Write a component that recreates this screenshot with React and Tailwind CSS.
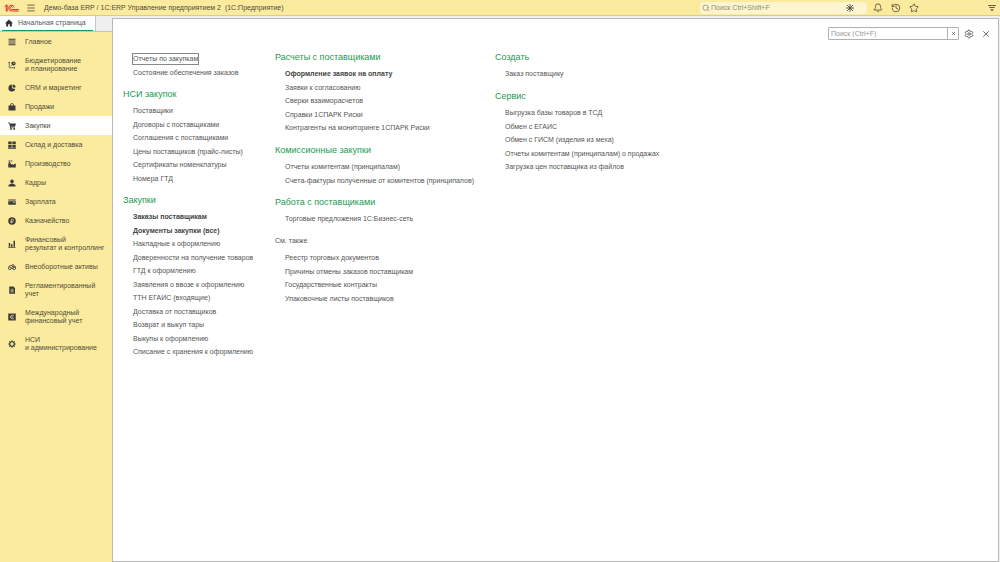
import { useState } from 'react'
import { Bell, History, Menu, Search, Settings, Star, X } from 'lucide-react'

const sections = [
  { icon: 'main', lines: ['Главное'] },
  { icon: 'budget', lines: ['Бюджетирование', 'и планирование'] },
  { icon: 'crm', lines: ['CRM и маркетинг'] },
  { icon: 'sales', lines: ['Продажи'] },
  { icon: 'purchases', lines: ['Закупки'] },
  { icon: 'stock', lines: ['Склад и доставка'] },
  { icon: 'factory', lines: ['Производство'] },
  { icon: 'staff', lines: ['Кадры'] },
  { icon: 'salary', lines: ['Зарплата'] },
  { icon: 'treasury', lines: ['Казначейство'] },
  { icon: 'finance', lines: ['Финансовый', 'результат и контроллинг'] },
  { icon: 'assets', lines: ['Внеоборотные активы'] },
  { icon: 'regulated', lines: ['Регламентированный', 'учет'] },
  { icon: 'ifrs', lines: ['Международный', 'финансовый учет'] },
  { icon: 'admin', lines: ['НСИ', 'и администрирование'] },
]

const columns = [
  {
    width: 'w-[152px] pt-px',
    groups: [
      { items: ['Отчеты по закупкам', 'Состояние обеспечения заказов'], focused: 'Отчеты по закупкам' },
      {
        title: 'НСИ закупок',
        items: [
          'Поставщики',
          'Договоры с поставщиками',
          'Соглашения с поставщиками',
          'Цены поставщиков (прайс-листы)',
          'Сертификаты номенклатуры',
          'Номера ГТД',
        ],
      },
      {
        title: 'Закупки',
        bold: ['Заказы поставщикам', 'Документы закупки (все)'],
        items: [
          'Заказы поставщикам',
          'Документы закупки (все)',
          'Накладные к оформлению',
          'Доверенности на получение товаров',
          'ГТД к оформлению',
          'Заявления о ввозе к оформлению',
          'ТТН ЕГАИС (входящие)',
          'Доставка от поставщиков',
          'Возврат и выкуп тары',
          'Выкупы к оформлению',
          'Списание с хранения к оформлению',
        ],
      },
    ],
  },
  {
    width: 'w-[220px]',
    groups: [
      {
        title: 'Расчеты с поставщиками',
        bold: ['Оформление заявок на оплату'],
        items: [
          'Оформление заявок на оплату',
          'Заявки к согласованию',
          'Сверки взаиморасчетов',
          'Справки 1СПАРК Риски',
          'Контрагенты на мониторинге 1СПАРК Риски',
        ],
      },
      {
        title: 'Комиссионные закупки',
        items: ['Отчеты комитентам (принципалам)', 'Счета-фактуры полученные от комитентов (принципалов)'],
      },
      { title: 'Работа с поставщиками', items: ['Торговые предложения 1С:Бизнес-сеть'] },
      {
        title: 'См. также',
        plain: true,
        items: [
          'Реестр торговых документов',
          'Причины отмены заказов поставщикам',
          'Государственные контракты',
          'Упаковочные листы поставщиков',
        ],
      },
    ],
  },
  {
    width: 'w-[190px]',
    groups: [
      { title: 'Создать', items: ['Заказ поставщику'] },
      {
        title: 'Сервис',
        items: [
          'Выгрузка базы товаров в ТСД',
          'Обмен с ЕГАИС',
          'Обмен с ГИСМ (изделия из меха)',
          'Отчеты комитентам (принципалам) о продажах',
          'Загрузка цен поставщика из файлов',
        ],
      },
    ],
  },
]

const shapes = {
  main: <path d="M1 1.5h14v2H1zM1 5.2h14v2H1zM1 8.9h14v2H1zM1 12.6h14v2H1z" />,
  budget: (
    <>
      <path d="M2.5 2v11.5H14M1 4l1.5-2L4 4M12 12l2 1.5-2 1.5M5.5 10.5l2-2" fill="none" stroke="currentColor" strokeWidth="1.4" />
      <circle cx="11" cy="5" r="4.2" />
      <path d="M11 2.5V5h2.5" fill="none" stroke="#fbeb9e" strokeWidth="1" />
    </>
  ),
  crm: (
    <>
      <path d="M7.5 1.2A7 7 0 1 0 14.6 10L8 8.5z" />
      <path d="M9.3.8a6.2 6.2 0 0 1 6 6.2h-6z" />
    </>
  ),
  sales: (
    <>
      <path d="M1 5h14v10H1z" />
      <path d="M5 8V4a3 3 0 0 1 6 0v4" fill="none" stroke="currentColor" strokeWidth="1.6" />
    </>
  ),
  purchases: (
    <>
      <path d="M0 1h3.2l.7 2H16l-2 6.500H5.800l.3 1.300H14v1.500H4.800L2.200 2.600H0z" />
      <circle cx="6" cy="14" r="1.8" />
      <circle cx="12.5" cy="14" r="1.8" />
    </>
  ),
  stock: <path d="M.5 1h6.8v5.7H.5zM8.700 1h6.800v5.700H8.700zM.5 8h6.800v5.300H.5zM8.700 8h6.800v5.300H8.700zM0 14h16v1.500H0z" />,
  factory: <path d="M.5 15V6.500h4.500l3 3V8l3.500 2V8.500L15.500 7v8zM1 1h3v2H1zM5 1h3.500v2H5zM1.500 4h3v2h-3z" />,
  staff: <path d="M8 .8a3.500 3.500 0 0 1 3.500 3.700c0 2.500-1.600 4.200-3.500 4.200S4.500 7 4.500 4.500A3.500 3.500 0 0 1 8 .8zM5.500 9.500h5l4.500 2.500v3H1v-3z" />,
  salary: <path d="M.5 3h15v2.200H.5zM.5 6.300h15V13.500H.5zM10.500 8.500V10h3V8.500z" fillRule="evenodd" />,
  treasury: (
    <>
      <circle cx="8" cy="8" r="7.5" />
      <path d="M6.500 12.500v-8h2.300a2 2 0 0 1 0 4.200H5M5 10.600h4.500" fill="none" stroke="#fbeb9e" strokeWidth="1.3" />
    </>
  ),
  finance: <path d="M1.500 6h3v7.500h-3zM6 8.500h3v5H6zM11 1.500h3v12h-3zM.5 14h14.500v1.300H.5z" />,
  assets: (
    <g fill="none" stroke="currentColor" strokeWidth="1.8">
      <circle cx="3.600" cy="10.500" r="2.700" />
      <circle cx="12.400" cy="10.500" r="2.700" />
      <path d="M1 7.500L5 5h3l2 3h6M6 10.500h4M8 3.500h3l2 4" />
    </g>
  ),
  regulated: (
    <>
      <path d="M2.500 1h8L14 4v11.500H2.500z" />
      <path d="M5 6.500h6.500M5 9h6.500M5 11.500h6.500M8.200 6.500v7" stroke="#fbeb9e" strokeWidth=".9" fill="none" />
    </>
  ),
  ifrs: (
    <>
      <path d="M.5 1h15v14H.5z" />
      <path d="M12 4.500H8.500a3.500 3.500 0 0 0 0 7H12M5 8h6" stroke="#fbeb9e" strokeWidth="1.300" fill="none" />
    </>
  ),
  admin: (
    <>
      <circle cx="8" cy="8" r="4.500" fill="none" stroke="currentColor" strokeWidth="2.400" />
      <path
        d="M8 .5v3M8 12.500v3M.5 8h3M12.500 8h3M2.700 2.700l2 2M11.300 11.300l2 2M2.700 13.300l2-2M11.300 4.700l2-2"
        stroke="currentColor"
        strokeWidth="2.400"
      />
    </>
  ),
}

function SectionIcon({ name }) {
  return (
    <svg viewBox="0 0 16 16" className="size-2 shrink-0 text-[#3c3c3c]" fill="currentColor" aria-hidden="true">
      {shapes[name]}
    </svg>
  )
}

function Logo() {
  return (
    <svg viewBox="0 0 30 16" className="h-2 w-[15px]" fill="none" stroke="#e0322b" strokeWidth="2" aria-label="1С">
      <path d="M1 5.500L4.500 2.500V15M4.500 2h1.800v13" />
      <path d="M20.500 6.500A5.800 5.800 0 1 0 15 14h14.500" />
      <path d="M17.500 7A2.800 2.800 0 1 0 15 11h14.500" />
    </svg>
  )
}

// the assistant mark at the end of the global search field
function Spark() {
  return (
    <svg viewBox="0 0 16 16" className="size-2" fill="none" stroke="#333" strokeWidth="1.6" aria-hidden="true">
      <path d="M8 0v16M0 8h16M2 2l12 12M14 2L2 14" />
    </svg>
  )
}

function TopBar() {
  return (
    <header className="flex h-4 items-center border-b border-[#d9cc8c] bg-[#fbeb9e] px-1 text-[#504b3a]">
      <Logo />
      <button aria-label="Меню" className="ml-[7px]">
        <Menu className="size-[10px]" strokeWidth={2} />
      </button>
      <h1 className="ml-2 whitespace-pre text-[7px] leading-[10px]">
        {'Демо-база ERP / 1С:ERP Управление предприятием 2  (1С:Предприятие)'}
      </h1>
      <label className="ml-auto flex h-3 w-[167px] items-center rounded-sm bg-[#fdf5cf] pr-[13px] pl-[2px]">
        <Search className="size-2 shrink-0 text-[#7a7660]" strokeWidth={2} />
        <input
          aria-label="Глобальный поиск"
          placeholder="Поиск Ctrl+Shift+F"
          className="ml-px min-w-0 flex-1 text-[7px] leading-[10px] outline-none placeholder:text-[#8f8b75]"
        />
        <Spark />
      </label>
      <div className="ml-[6px] flex items-center gap-2">
        <button aria-label="Уведомления">
          <Bell className="size-[10px]" strokeWidth={2} />
        </button>
        <button aria-label="История">
          <History className="size-[10px]" strokeWidth={2} />
        </button>
        <button aria-label="Избранное">
          <Star className="size-[10px]" strokeWidth={2} />
        </button>
      </div>
      <button aria-label="Сервис и настройки" className="ml-[69px]">
        <svg viewBox="0 0 16 16" className="size-2" fill="none" stroke="currentColor" strokeWidth="1.8">
          <path d="M0 3h16M2.500 7h11" />
          <path d="M4.500 10.500h7L8 14.500z" fill="currentColor" stroke="none" />
        </svg>
      </button>
    </header>
  )
}

function Sidebar({ active, onSelect }) {
  return (
    <nav className="flex-1 bg-[#fbeb9e]">
      {sections.map(({ icon, lines }) => (
        <button
          key={icon}
          onClick={() => onSelect(icon)}
          className={`flex w-full items-center gap-[9px] pl-2 text-left text-[7px] leading-[8px] text-[#504b3a] ${
            lines.length > 1 ? 'h-[27px]' : 'h-[19px]'
          } ${active === icon ? 'bg-white' : ''}`}
        >
          <SectionIcon name={icon} />
          <span className="whitespace-nowrap">
            {lines.map((l) => (
              <span key={l} className="block">
                {l}
              </span>
            ))}
          </span>
        </button>
      ))}
    </nav>
  )
}

function Group({ title, items, bold = [], plain, focused }) {
  return (
    <section>
      {title && (
        <h2 className={`mb-1 leading-3 ${plain ? 'text-[7px] text-[#555]' : 'text-[9px] text-[#1a9a52]'}`}>{title}</h2>
      )}
      <ul className="pl-[10px] text-[7px] text-[#555]">
        {items.map((item) => (
          <li key={item} className="flex items-center whitespace-nowrap odd:h-[14px] even:h-[13px]">
            <a
              href="#"
              className={`leading-[10px] ${bold.includes(item) ? 'font-bold text-[#444]' : ''} ${
                item === focused ? 'outline outline-[#888]' : ''
              }`}
            >
              {item}
            </a>
          </li>
        ))}
      </ul>
    </section>
  )
}

export default function App() {
  const [active, setActive] = useState('purchases')
  const [query, setQuery] = useState('')

  return (
    <div className="flex min-h-screen flex-col bg-[#f0f0f0] font-['Liberation_Sans',Arial,sans-serif]">
      <TopBar />
      <div className="flex flex-1">
        <div className="flex w-28 shrink-0 flex-col">
          <div className="flex h-4 border-b border-[#c4c4c4]">
            <button className="flex w-24 items-center border-r border-[#c4c4c4] bg-white px-[2px]">
              <span className="flex h-full w-full items-center gap-[5px] border-b border-[#1a9a52] pl-[3px] text-[7px] leading-[10px] text-[#555]">
                <svg viewBox="0 0 16 16" className="size-2" fill="#333" aria-hidden="true">
                  <path d="M8 1L0 8.500h2.300V15h4v-4.500h3.400V15h4V8.500H16z" />
                </svg>
                Начальная страница
              </span>
            </button>
          </div>
          <Sidebar active={active} onSelect={setActive} />
        </div>
        <main className="mt-[2px] mr-[1px] min-w-0 flex-1 border border-[#b8b8b8] bg-white">
          <div className="flex items-center justify-end pt-2 pr-[7px]">
            <div className="flex h-[13px] w-[131px] rounded-[1px] border border-[#b0b0b0]">
              <input
                aria-label="Поиск по командам"
                placeholder="Поиск (Ctrl+F)"
                value={query}
                onChange={(e) => setQuery(e.target.value)}
                className="min-w-0 flex-1 px-[2px] text-[7px] leading-[10px] outline-none placeholder:text-[#999]"
              />
              <button
                aria-label="Очистить"
                onClick={() => setQuery('')}
                className="flex w-[11px] items-center justify-center border-l border-[#b0b0b0] text-[#555]"
              >
                <X className="size-[5px]" strokeWidth={3} />
              </button>
            </div>
            <button aria-label="Настройки" className="ml-[5px] text-[#555]">
              <Settings className="size-[10px]" strokeWidth={2} />
            </button>
            <button aria-label="Закрыть" className="ml-[7px] text-[#555]">
              <X className="size-[10px]" strokeWidth={2} />
            </button>
          </div>
          <div className="flex pt-[11px] pl-[10px]">
            {columns.map(({ width, groups }) => (
              <div key={width} className={`flex shrink-0 flex-col gap-[9px] ${width}`}>
                {groups.map((g) => (
                  <Group key={g.title || 'reports'} {...g} />
                ))}
              </div>
            ))}
          </div>
        </main>
      </div>
    </div>
  )
}
